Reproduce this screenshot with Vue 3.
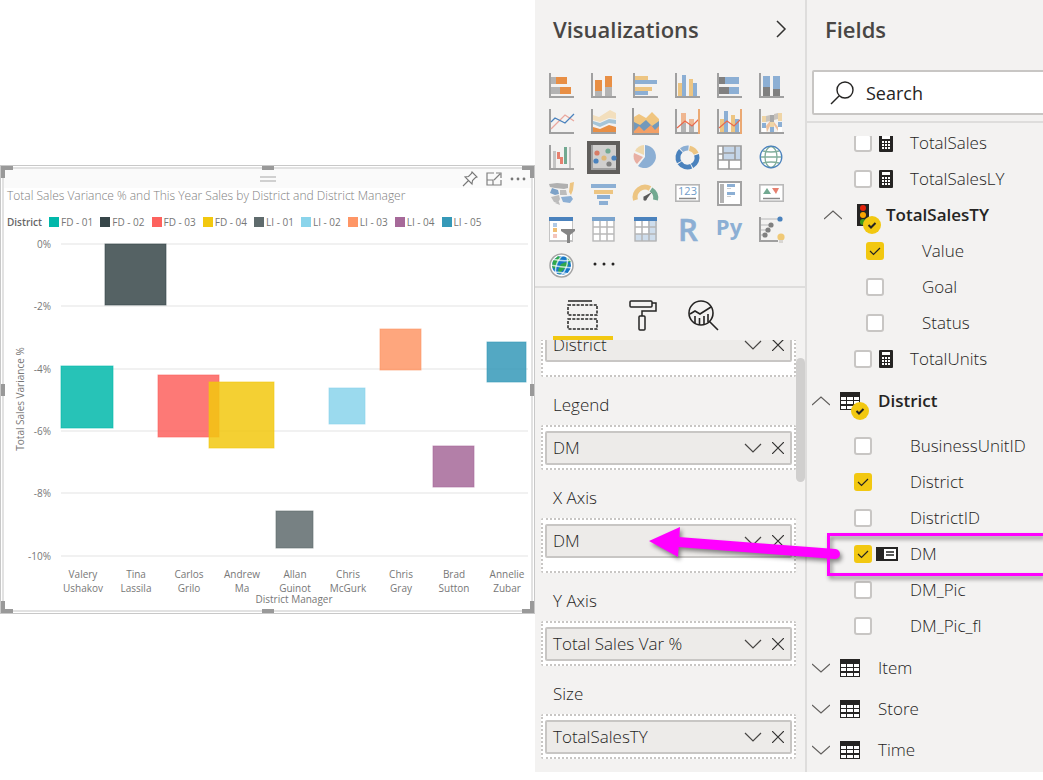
<script setup>
import { ref } from 'vue'

const series = [
  { name: 'FD - 01', color: '#01b8aa', x: 61, y: 366, size: 52, h: 62 },
  { name: 'FD - 02', color: '#374649', x: 105, y: 244, size: 61, h: 61 },
  { name: 'FD - 03', color: '#fd625e', x: 158, y: 375, size: 61, h: 62 },
  { name: 'FD - 04', color: '#f2c80f', x: 209, y: 382, size: 65, h: 66 },
  { name: 'LI - 01', color: '#5f6b6d', x: 276, y: 511, size: 37, h: 37 },
  { name: 'LI - 02', color: '#8ad4eb', x: 329, y: 388, size: 36, h: 36 },
  { name: 'LI - 03', color: '#fe9666', x: 380, y: 329, size: 41, h: 41 },
  { name: 'LI - 04', color: '#a66999', x: 433, y: 446, size: 41, h: 41 },
  { name: 'LI - 05', color: '#3599b8', x: 487, y: 342, size: 39, h: 40 },
]

const ticks = ['0%', '-2%', '-4%', '-6%', '-8%', '-10%'].map((label, i) => ({
  label,
  y: Math.round(244 + i * 62.3),
}))

const managers = [
  ['Valery', 'Ushakov'], ['Tina', 'Lassila'], ['Carlos', 'Grilo'],
  ['Andrew', 'Ma'], ['Allan', 'Guinot'], ['Chris', 'McGurk'],
  ['Chris', 'Gray'], ['Brad', 'Sutton'], ['Annelie', 'Zubar'],
].map((parts, i) => ({ parts, x: 83 + i * 53 }))

const handles = ['tl', 't', 'tr', 'l', 'r', 'bl', 'b', 'br']

const axes = '<path d="M1 0V24H25" fill="none" stroke="#a0a0a0" stroke-width="2"/>'
const bar = (x, y, w, h, c) => `<rect x="${x}" y="${y}" width="${w}" height="${h}" fill="${c}"/>`
const dot = (x, y, r, c) => `<circle cx="${x}" cy="${y}" r="${r}" fill="${c}"/>`
const arc = (start, len, c) => `<circle cx="12.5" cy="12.5" r="9.5" fill="none" stroke="${c}" stroke-width="5" pathLength="360" stroke-dasharray="${len} ${360 - len}" transform="rotate(${start - 90} 12.5 12.5)"/>`
const O = '#e88f45', G = '#b3b3b3', B = '#8cafd4', Y = '#edc582', D = '#808080', N = '#4a82bd', R = '#e6806f', T = '#72a991'
const line = '<path d="M2 19 10 12 17 17 24 10" fill="none" stroke="#e8694c" stroke-width="1.2"/><path d="M24 0V25" stroke="#eba973" stroke-width="2"/>'

const visuals = [
  { name: 'Stacked bar chart', art: axes + bar(2, 4, 5, 7, G) + bar(7, 4, 11, 7, O) + bar(2, 14, 9, 7, G) + bar(11, 14, 11, 7, O) },
  { name: 'Stacked column chart', art: axes + bar(4, 7, 7, 11, O) + bar(4, 18, 7, 5, G) + bar(14, 3, 7, 11, O) + bar(14, 14, 7, 9, G) },
  { name: 'Clustered bar chart', art: axes + bar(2, 3, 13, 4, Y) + bar(2, 7, 22, 4, B) + bar(2, 14, 17, 4, Y) + bar(2, 18, 13, 4, B) },
  { name: 'Clustered column chart', art: axes + bar(3, 10, 4, 13, Y) + bar(7, 2, 4, 21, B) + bar(14, 6, 4, 17, Y) + bar(18, 10, 4, 13, B) },
  { name: '100% stacked bar chart', art: axes + bar(2, 4, 6, 7, D) + bar(8, 4, 14, 7, B) + bar(2, 14, 10, 7, D) + bar(12, 14, 10, 7, B) },
  { name: '100% stacked column chart', art: axes + bar(4, 3, 7, 11, B) + bar(4, 14, 7, 9, D) + bar(14, 3, 7, 13, B) + bar(14, 16, 7, 7, D) },
  { name: 'Line chart', art: axes + '<g fill="none" stroke-width="1.3"><path d="M2 20 16 6 25 12" stroke="#eaa89e"/><path d="M2 13 6 9 16 14 25 5" stroke="#4a82bd"/></g>' },
  { name: 'Area chart', art: '<path d="M2 6 8 8 19 1 25 4V10L18 9 9 13 2 11Z" fill="#f3dfbd"/><path d="M2 12 9 14 18 10 25 11V15L18 14 9 18 2 15Z" fill="#a5c5d8"/><path d="M2 18 9 20 18 16 25 18V23H2Z" fill="#e88f45"/>' + axes },
  { name: 'Stacked area chart', art: '<path d="M1 8 6 5 13 9 19 3 26 10V24H1Z" fill="#f0c57f"/><path d="M1 13 7 16 13 11 19 17 26 12V24H1Z" fill="#7299bb"/><path d="M1 22 6 17 11 22 18 16 22 21 26 17V24H1Z" fill="#f3a066"/><path d="M0 -1V25H26" fill="none" stroke="#999" stroke-width="2"/>' },
  { name: 'Line and stacked column chart', art: axes + bar(6, 4, 5, 10, '#efb690') + bar(6, 14, 5, 9, G) + bar(14, 10, 5, 6, '#efb690') + bar(14, 16, 5, 7, G) + line },
  { name: 'Line and clustered column chart', art: axes + bar(3, 10, 4, 13, Y) + bar(7, 2, 4, 21, B) + bar(14, 6, 4, 17, Y) + bar(18, 10, 4, 13, B) + line },
  { name: 'Ribbon chart', art: axes + '<path d="M7 7 11 6V12L7 13ZM15 5 19 4V10L15 11Z" fill="#c8c3bd"/><path d="M7 17 11 12V17L8 23ZM15 13 19 18V22L15 16Z" fill="#f0c19c"/>' + bar(3, 7, 4, 6, '#efd5a6') + bar(3, 14, 4, 5, B) + bar(3, 19, 4, 4, '#fff') + bar(11, 6, 4, 7, '#a8a8a8') + bar(11, 13, 4, 5, '#efd5a6') + bar(11, 18, 4, 5, B) + bar(19, 4, 4, 8, '#efd5a6') + bar(19, 13, 4, 5, B) + bar(19, 18, 4, 5, '#fff') },
  { name: 'Waterfall chart', art: axes + bar(4, 6, 3, 17, '#c4c4c4') + bar(8, 7, 3, 7, R) + bar(11, 12, 3, 7, R) + bar(15, 2, 3, 17, T) + bar(20, 2, 2, 21, '#c4c4c4') },
  { name: 'Scatter chart', selected: true, art: axes + dot(6, 8, 2.6, '#d87c66') + dot(17, 6, 2.6, T) + dot(13, 13, 2.6, '#dfb878') + dot(5, 16, 2.6, N) + dot(23, 13, 2.6, N) + dot(18, 19, 2.6, D) },
  { name: 'Pie chart', art: '<path d="M12 0A11.5 11.5 0 1 1 5 21L12 12Z" fill="#8cafd4"/><path d="M11 0V10L2 6A11 11 0 0 1 11 0Z" fill="#efd9ae"/><path d="M1 8 10 12 4 19A11 11 0 0 1 1 8Z" fill="#e8afa3"/>' },
  { name: 'Donut chart', art: arc(12, 55, Y) + arc(73, 78, N) + arc(157, 78, N) + arc(241, 74, N) + arc(321, 45, B) },
  { name: 'Treemap', art: bar(1, 1, 23, 23, '#fff') + bar(6, 2, 12, 13, '#c4d5e8') + bar(18, 2, 6, 13, '#c4d5e8') + '<path d="M1 1H24V24H1ZM6 1V15M18 1V15M1 15H24M6 8H18M1 9H6M12 15V24" fill="none" stroke="#9a9a9a" stroke-width="1.6"/>' },
  { name: 'Map', art: '<circle cx="12" cy="12" r="10.5" fill="#fff"/><g fill="none" stroke="#82ae9c" stroke-width="1.3"><ellipse cx="12" cy="12" rx="6" ry="10.5"/><path d="M2 12H22M4 6Q12 8 20 6M4 18Q12 16 20 18"/></g><circle cx="12" cy="12" r="10.8" fill="none" stroke="#4a82bd" stroke-width="1.3"/>' },
  { name: 'Filled map', art: '<path d="M0 3 8 2 19 3V7L15 8 6 7 1 6Z" fill="#b0b0b0"/><path d="M3 7 9 9 10 13 6 14 1 12Z" fill="#7da2c8"/><path d="M11 9 17 9 18 14 11 14ZM2 16 10 14 11 18 9 22 5 21ZM6 22 10 21 11 24Z" fill="#bcbcbc"/><path d="M12 16 22 15 24 18 21 22 14 21Z" fill="#8cafd4"/><path d="M21 2 25 1 24 9 22 14 20 11Z" fill="#edc582"/>' },
  { name: 'Funnel', art: bar(0, 3, 25, 4, B) + bar(3, 9, 19, 4, Y) + bar(6, 14, 13, 4, B) + bar(8, 20, 9, 4, B) },
  { name: 'Gauge', art: '<path d="M2.5 19A10 10 0 0 1 17 7.5" fill="none" stroke="#edc582" stroke-width="5"/><path d="M18 8.500A10 10 0 0 1 22.5 19" fill="none" stroke="#72a991" stroke-width="5"/><path d="M10 16 19 11 13 19Z" fill="#5a5a5a"/>' + dot(12, 18, 1.7, '#5a5a5a') },
  { name: 'Card', art: '<rect x=".8" y="3.8" width="23.4" height="16.4" fill="#fff" stroke="#b5b5b5" stroke-width="1.6"/><text x="12.5" y="14" font-family="Open Sans, sans-serif" font-size="11" text-anchor="middle" fill="#6f9cc8">123</text><path d="M4 17.500H21" stroke="#888" stroke-width="1.5"/>' },
  { name: 'Multi-row card', art: '<rect x="1" y="1" width="23" height="23" fill="#fff" stroke="#a3a3a3" stroke-width="2"/>' + bar(3, 3, 4, 19, G) + bar(10, 3, 8, 3, B) + bar(10, 7, 4, 1, '#ccc') + bar(10, 11, 8, 3, B) + bar(10, 15, 4, 1, '#ccc') },
  { name: 'KPI', art: '<rect x=".8" y="3.8" width="23.4" height="16.4" fill="#fff" stroke="#b9b9b9" stroke-width="1.6"/><path d="M4 13 8 7 12 13Z" fill="#72a991"/><path d="M13 7H20L17 13Z" fill="#e6806f"/><path d="M4 17.500H21" stroke="#888" stroke-width="1.5"/>' },
  { name: 'Slicer', art: bar(0, 0, 24, 25, '#c4c4c4') + bar(1, 4, 22, 19, '#fff') + bar(0, 0, 24, 4, N) + bar(4, 6, 4, 4, '#b0c9e4') + bar(4, 11, 4, 4, '#f0be72') + bar(4, 17, 4, 4, '#f3c5bc') + '<path d="M12 12H26L26 14 21 18V26H18V18L12 14Z" fill="#858585"/>' },
  { name: 'Table', art: bar(1, 0, 23, 25, '#fff') + bar(1, 0, 23, 4, '#7ba4cd') + '<path d="M2 4V24H23V4M2 10H23M2 17H23M9 4V24M16 4V24" fill="none" stroke="#b9b9b9" stroke-width="1.5"/>' },
  { name: 'Matrix', art: bar(1, 0, 23, 25, '#fff') + bar(15, 4, 9, 20, '#ceddec') + bar(2, 17, 14, 7, '#ceddec') + bar(1, 0, 23, 4, N) + '<path d="M2 4V24H23V4M2 10H23M2 17H23M9 4V24M16 4V24" fill="none" stroke="#b5b5b5" stroke-width="1.5"/>' },
  { name: 'R script visual', art: '<text x="13" y="24" font-family="Open Sans, sans-serif" font-size="31" font-weight="600" text-anchor="middle" fill="#8cafd4" stroke="#8cafd4" stroke-width=".6">R</text>' },
  { name: 'Python visual', art: '<text x="12" y="18" font-family="Open Sans, sans-serif" font-size="22" font-weight="700" text-anchor="middle" fill="#8cafd4">Py</text>' },
  { name: 'Key influencers', art: '<path d="M2 2H20M2 8H12M2 13H9M2 18H6" stroke="#ccc" stroke-width="1.5"/><path d="M1 0V24H19" fill="none" stroke="#a0a0a0" stroke-width="2"/>' + dot(21, 2, 2.6, N) + dot(12, 8, 2.6, D) + dot(9, 13, 2.6, D) + dot(6, 18, 2.6, D) + dot(22, 20, 3.6, '#f0c976') + bar(20, 23, 4, 3, '#d8d6d3') },
  { name: 'ArcGIS map', art: '<circle cx="12.5" cy="12.5" r="11" fill="#fff"/><circle cx="12.5" cy="12.5" r="9.5" fill="#1678c8"/><path d="M4 8 9 3 12 5 8 10 6 16 3 14ZM12 11 17 9 20 12 14 17 10 21 9 17ZM17 4 22 8 20 10Z" fill="#2fa84b"/><g fill="none" stroke="#fff" stroke-opacity=".7" stroke-width="1.4"><ellipse cx="12.5" cy="12.5" rx="5" ry="11" transform="rotate(20 12.5 12.5)"/><path d="M3 6Q14 9 23 7M1 12Q11 14 24 15M3 19Q12 19 20 21"/></g><circle cx="12.5" cy="12.5" r="11.5" fill="none" stroke="#a5a5a5" stroke-width="1.5"/>' },
  { name: 'More visuals', art: dot(4, 11, 1.5, '#252423') + dot(13, 11, 1.5, '#252423') + dot(22, 11, 1.5, '#252423') },
]

const wells = [
  { value: 'District', roomy: true },
  { label: 'Legend', value: 'DM' },
  { label: 'X Axis', value: 'DM', roomy: true },
  { label: 'Y Axis', value: 'Total Sales Var %' },
  { label: 'Size', value: 'TotalSalesTY' },
]

const rows = ref([
  { kind: 'field', name: 'TotalSales', icon: 'calc', checked: false },
  { kind: 'field', name: 'TotalSalesLY', icon: 'calc', checked: false },
  { kind: 'kpi', name: 'TotalSalesTY' },
  { kind: 'field', name: 'Value', nested: true, checked: true },
  { kind: 'field', name: 'Goal', nested: true, checked: false },
  { kind: 'field', name: 'Status', nested: true, checked: false },
  { kind: 'field', name: 'TotalUnits', icon: 'calc', checked: false },
  { kind: 'table', name: 'District', open: true },
  { kind: 'field', name: 'BusinessUnitID', checked: false },
  { kind: 'field', name: 'District', checked: true },
  { kind: 'field', name: 'DistrictID', checked: false },
  { kind: 'field', name: 'DM', icon: 'card', checked: true },
  { kind: 'field', name: 'DM_Pic', checked: false },
  { kind: 'field', name: 'DM_Pic_fl', checked: false },
  { kind: 'table', name: 'Item' },
  { kind: 'table', name: 'Store' },
  { kind: 'table', name: 'Time' },
])
</script>

<template>
  <div class="app">
    <main class="report">
      <section class="visual" aria-label="Scatter chart">
        <span v-for="h in handles" :key="h" class="handle" :class="h"></span>
        <header class="visual-bar">
          <svg class="grip" width="16" height="6" viewBox="0 0 16 6"><path d="M0 1H16M0 5H16" stroke="#a6a6a6" stroke-width="1.2" /></svg>
          <div class="visual-tools">
            <button aria-label="Pin visual">
              <svg width="16" height="16" viewBox="0 0 16 16" fill="none" stroke="#777" stroke-width="1.1"><path d="M10 1 15 6 13.5 6.5 10.5 9.5 10 13 3 6 6.5 5.5 9.5 2.5ZM6.5 9.5 1 15" /></svg>
            </button>
            <button aria-label="Focus mode">
              <svg width="16" height="14" viewBox="0 0 16 14" fill="none" stroke="#808080" stroke-width="1.2"><path d="M8 1H1V13H15V8M1 8H7V13M8 8 14 2M10 1H15V6" /></svg>
            </button>
            <button aria-label="More options">
              <svg width="16" height="4" viewBox="0 0 16 4" fill="#777"><circle cx="2" cy="2" r="1.4" /><circle cx="8" cy="2" r="1.4" /><circle cx="14" cy="2" r="1.4" /></svg>
            </button>
          </div>
        </header>
        <h1>Total Sales Variance % and This Year Sales by District and District Manager</h1>
        <div class="legend">
          <b>District</b>
          <span v-for="s in series" :key="s.name" class="legend-item">
            <i :style="{ background: s.color }"></i>{{ s.name }}
          </span>
        </div>
        <svg class="plot" viewBox="0 232 535 382">
          <g v-for="t in ticks" :key="t.label">
            <path :d="`M61 ${t.y}H528`" stroke="#ececec" stroke-width="1.5" />
            <text x="51" :y="t.y + 4" text-anchor="end">{{ t.label }}</text>
          </g>
          <rect
            v-for="s in series" :key="s.name" :x="s.x" :y="s.y" :width="s.size" :height="s.h"
            :fill="s.color" :stroke="s.color" fill-opacity=".85" stroke-opacity=".6"
          />
          <g v-for="m in managers" :key="m.x" text-anchor="middle">
            <text :x="m.x" y="578">{{ m.parts[0] }}</text>
            <text :x="m.x" y="592">{{ m.parts[1] }}</text>
          </g>
          <text x="294" y="603" text-anchor="middle">District Manager</text>
          <text transform="translate(24 399) rotate(-90)" text-anchor="middle">Total Sales Variance %</text>
        </svg>
      </section>
    </main>

    <aside class="viz">
      <header class="pane-head">
        <h2>Visualizations</h2>
        <button aria-label="Collapse pane">
          <svg width="12" height="20" viewBox="0 0 12 20" fill="none" stroke="#323130" stroke-width="1.5"><path d="M2 2 10 10 2 18" /></svg>
        </button>
      </header>
      <div class="gallery">
        <button v-for="v in visuals" :key="v.name" :aria-label="v.name" :class="{ selected: v.selected }">
          <svg width="25" height="25" viewBox="0 0 25 25" v-html="v.art"></svg>
        </button>
      </div>
      <nav class="tabs">
        <button class="active" aria-label="Fields">
          <svg width="32" height="32" viewBox="0 0 32 32" fill="none" stroke="#252423" stroke-width="1.5"><path d="M1 2H25" /><path d="M1 6H30V16H1ZM1 20H30V30H1Z" stroke-dasharray="3 1.3" /></svg>
        </button>
        <button aria-label="Format">
          <svg width="32" height="32" viewBox="0 0 32 32" fill="none" stroke="#252423" stroke-width="1.5"><rect x="3" y="2" width="22" height="6" rx="1" /><path d="M25 4H29V12H15V17" /><rect x="12" y="17" width="6" height="14" rx="1" /></svg>
        </button>
        <button aria-label="Analytics">
          <svg width="32" height="32" viewBox="0 0 32 32" fill="none" stroke="#252423" stroke-width="1.6"><circle cx="14" cy="14" r="12" /><path d="M22.5 22.5 31 31M3 15 8 12 13 15 24 8M8 17V24M12.5 19V26M17 17V25M21 15V23" /></svg>
        </button>
      </nav>
      <div class="wells">
        <div class="well-list">
          <div v-for="w in wells" :key="w.label || 'Details'" class="well">
            <h3 v-if="w.label">{{ w.label }}</h3>
            <div class="drop" :class="{ roomy: w.roomy }">
              <div class="pill">
                <span>{{ w.value }}</span>
                <button aria-label="Field options">
                  <svg width="18" height="10" viewBox="0 0 18 10" fill="none" stroke="#484644" stroke-width="1.2"><path d="M1 1 9 9 17 1" /></svg>
                </button>
                <button aria-label="Remove field">
                  <svg width="12" height="12" viewBox="0 0 12 12" fill="none" stroke="#323130" stroke-width="1.2"><path d="M0 0 12 12M12 0 0 12" /></svg>
                </button>
              </div>
            </div>
          </div>
        </div>
        <span class="thumb"></span>
      </div>
    </aside>

    <aside class="fields">
      <header class="pane-head"><h2>Fields</h2></header>
      <div class="search-wrap">
        <label class="search">
          <svg width="24" height="24" viewBox="0 0 24 24" fill="none" stroke="#252423" stroke-width="1.4"><circle cx="15" cy="9" r="8" /><path d="M9 15 1 23" /></svg>
          <input type="text" placeholder="Search" aria-label="Search" />
        </label>
      </div>
      <div class="tree">
        <div class="rows">
          <template v-for="(r, i) in rows" :key="i">
            <label v-if="r.kind === 'field'" class="field" :class="{ nested: r.nested }">
              <span class="check">
                <input v-model="r.checked" type="checkbox" />
                <svg v-if="r.checked" width="18" height="18" viewBox="0 0 18 18" fill="none" stroke="#252423" stroke-width="1.2"><path d="M4 9 7.5 12.5 14 6" /></svg>
              </span>
              <span class="glyph">
                <svg v-if="r.icon === 'calc'" width="14" height="18" viewBox="0 0 14 18"><rect width="14" height="18" rx="1" fill="#252423" /><path d="M3 2H11V5H3ZM3 7H5V9H3ZM6 7H8V9H6ZM9 7H11V9H9ZM3 10H5V12H3ZM6 10H8V12H6ZM9 10H11V12H9ZM3 13H5V15H3ZM6 13H8V15H6ZM9 13H11V15H9Z" fill="#fff" /></svg>
                <svg v-if="r.icon === 'card'" class="wide" width="22" height="14" viewBox="0 0 22 14"><rect width="22" height="14" fill="#252423" /><path d="M8 2H20V12H8Z" fill="#fff" /><path d="M10 5H18M10 8H18" stroke="#252423" stroke-width="1.3" /></svg>
              </span>
              <span>{{ r.name }}</span>
            </label>
            <button v-else class="branch" :class="[r.kind, { open: r.open }]">
              <svg class="chevron" width="18" height="10" viewBox="0 0 18 10" fill="none" stroke="#605e5c" stroke-width="1.2">
                <path :d="r.open || r.kind === 'kpi' ? 'M0 9 9 1 18 9' : 'M0 1 9 9 18 1'" />
              </svg>
              <span class="node">
                <svg v-if="r.kind === 'kpi'" width="12" height="22" viewBox="0 0 12 22"><rect width="12" height="22" fill="#252423" /><circle cx="6" cy="4" r="3" fill="#e3230b" /><circle cx="6" cy="11" r="3" fill="#f9a500" /><circle cx="6" cy="18" r="3" fill="#3b9b19" /></svg>
                <svg v-else width="20" height="18" viewBox="0 0 20 18"><rect width="20" height="18" fill="#252423" /><path d="M1 5H6V8H1ZM7 5H13V8H7ZM14 5H19V8H14ZM1 9H6V12H1ZM7 9H13V12H7ZM14 9H19V12H14ZM1 14H6V17H1ZM7 14H13V17H7ZM14 14H19V17H14Z" fill="#fff" /></svg>
                <svg v-if="r.open || r.kind === 'kpi'" class="badge" width="18" height="18" viewBox="0 0 18 18"><circle cx="9" cy="9" r="9" fill="#f2c811" /><path d="M5.5 9 8 11.5 12.5 7" fill="none" stroke="#252423" stroke-width="2" /></svg>
              </span>
              <span>{{ r.name }}</span>
            </button>
          </template>
        </div>
      </div>
    </aside>

    <svg class="callout" width="400" height="70" viewBox="643 520 400 70">
      <rect x="828.5" y="534.5" width="230" height="40" fill="none" stroke="#ff00ff" stroke-width="3" />
      <path d="M678 542 835 554" stroke="#ff00ff" stroke-width="10" stroke-linecap="round" />
      <path d="M649 541 680 527 678 557Z" fill="#ff00ff" />
    </svg>
  </div>
</template>

<style>
body {
  background: #fff;
}
</style>

<style scoped>
.app {
  position: relative;
  display: flex;
  font-family: "Open Sans", "Noto Sans", sans-serif;
  color: #252423;
  overflow: hidden;
}
button {
  margin: 0;
  padding: 0;
  border: 0;
  background: none;
  font: inherit;
  color: inherit;
}
svg {
  display: block;
}
h1, h2, h3 {
  margin: 0;
  font-weight: 400;
}

/* Report canvas */
.report {
  flex: 1;
  min-width: 0;
  padding-top: 165px;
}
.visual {
  position: relative;
  box-shadow: inset 0 0 0 1px #c8c8c8, inset 0 0 0 2px #fff, inset 0 0 0 4px #e2e2e2;
}
.handle {
  position: absolute;
  box-sizing: border-box;
  width: 12px;
  height: 12px;
  border: 0 solid #999;
}
.tl { top: 1px; left: 1px; border-width: 4px 0 0 4px; }
.tr { top: 1px; right: 1px; border-width: 4px 4px 0 0; }
.bl { bottom: 1px; left: 1px; border-width: 0 0 4px 4px; }
.br { bottom: 1px; right: 1px; border-width: 0 4px 4px 0; }
.t { top: 1px; left: calc(50% - 6px); border-top-width: 4px; }
.b { bottom: 1px; left: calc(50% - 6px); border-bottom-width: 4px; }
.l { left: 1px; top: calc(50% - 6px); border-left-width: 4px; }
.r { right: 1px; top: calc(50% - 6px); border-right-width: 4px; }
.visual-bar {
  display: grid;
  grid-template-columns: 1fr auto 1fr;
  align-items: center;
  height: 19px;
  margin: 0 4px;
  border-top: 4px solid transparent;
  background: #fafafa;
  background-clip: padding-box;
}
.grip {
  grid-column: 2;
}
.visual-tools {
  display: flex;
  align-items: center;
  justify-content: flex-end;
  gap: 8px;
  padding-right: 5px;
}
.visual h1 {
  padding-left: 7px;
  font-family: "Open Sans", "Noto Sans", sans-serif;
  font-weight: 300;
  font-size: 12px;
  line-height: 16px;
  color: #808080;
  white-space: nowrap;
}
.legend {
  display: flex;
  align-items: center;
  gap: 7px;
  height: 28px;
  padding: 8px 0 0 7px;
  box-sizing: border-box;
  font-size: 10px;
  color: #777;
  white-space: nowrap;
}
.legend b {
  font-weight: 600;
  color: #666;
}
.legend-item {
  display: flex;
  align-items: center;
  gap: 2px;
}
.legend-item i {
  width: 10px;
  height: 10px;
}
.plot {
  width: 100%;
  font-size: 10px;
  fill: #777;
}

/* Panes */
.viz, .fields {
  box-sizing: border-box;
  background: #f3f2f1;
}
.viz {
  flex: 0 0 272px;
  border-right: 2px solid #dedddc;
}
.fields {
  flex: 0 0 236px;
  overflow: hidden;
}
.pane-head {
  display: flex;
  align-items: center;
  justify-content: space-between;
  height: 60px;
  padding: 0 18px 3px;
  box-sizing: border-box;
}
.pane-head h2 {
  font-size: 22px;
  line-height: 30px;
  font-weight: 600;
  color: #484644;
}
.gallery {
  display: grid;
  grid-template-columns: repeat(6, 33px);
  grid-auto-rows: 33px;
  gap: 3px 9px;
  padding: 9px 0 4px 10px;
}
.gallery button {
  display: grid;
  place-items: center;
}
.gallery svg {
  overflow: visible;
}
.gallery .selected {
  background: #d0cfce;
  box-shadow: inset 0 0 0 4px #605e5c;
}
.tabs {
  display: flex;
  height: 54px;
  padding-left: 18px;
  border-top: 2px solid #dedddc;
  box-sizing: border-box;
}
.tabs button {
  display: grid;
  justify-content: center;
  width: 60px;
  padding-top: 11px;
  box-sizing: border-box;
  align-content: start;
}
.tabs .active {
  background: linear-gradient(#f2c811, #f2c811) bottom / 100% 4px no-repeat;
}
.wells {
  position: relative;
  overflow: hidden;
}
.well-list {
  margin-top: -18px;
  padding: 0 9px 13px 6px;
}
.well h3 {
  height: 48px;
  padding: 8px 0 0 12px;
  box-sizing: border-box;
  font-size: 17px;
  line-height: 40px;
  font-weight: 300;
}
.drop {
  padding: 4px 2px 3px;
  background: #fff;
  border: 2px dotted #c8c6c4;
  border-radius: 2px;
}
.drop.roomy {
  padding-bottom: 13px;
}
.pill {
  display: flex;
  align-items: center;
  gap: 10px;
  height: 34px;
  box-sizing: border-box;
  padding: 0 6px;
  border: 2px solid #c8c6c4;
  border-radius: 2px;
  background: #edebe9;
  font-size: 17px;
  line-height: 30px;
  font-weight: 300;
}
.pill span {
  flex: 1;
}
.thumb {
  position: absolute;
  right: 0;
  top: 18px;
  width: 9px;
  height: 124px;
  border-radius: 5px;
  background: #d0cfce;
}

/* Fields pane */
.search-wrap {
  padding: 10px 0 6px 5px;
  border-bottom: 2px solid #dedddc;
}
.search {
  display: flex;
  align-items: center;
  gap: 12px;
  height: 45px;
  margin-right: -10px;
  padding-left: 16px;
  box-sizing: border-box;
  border: 2px solid #c8c6c4;
  border-radius: 2px;
  background: #fff;
}
.search input {
  flex: 1;
  min-width: 0;
  border: 0;
  padding: 0;
  outline: 0;
  background: none;
  font: 400 18px "Open Sans", "Noto Sans", sans-serif;
  color: #252423;
}
.search input::placeholder {
  color: #252423;
  opacity: 1;
}
.tree {
  margin-top: 13px;
  overflow: hidden;
}
.rows {
  margin-top: -11px;
  font-size: 17px;
  line-height: 22px;
  font-weight: 300;
}
.field {
  display: flex;
  align-items: center;
  height: 36px;
  padding-left: 47px;
}
.field.nested {
  padding-left: 59px;
}
.check {
  display: grid;
}
.check > * {
  grid-area: 1 / 1;
}
.check input {
  appearance: none;
  width: 18px;
  height: 18px;
  margin: 0;
  box-sizing: border-box;
  border: 2px solid #c8c6c4;
  border-radius: 3px;
  background: #fff;
}
.check input:checked {
  border-color: #f2c811;
  background: #f2c811;
}
.check svg {
  position: relative;
  pointer-events: none;
}
.glyph {
  width: 31px;
  padding-left: 7px;
}
.glyph .wide {
  margin-left: -3px;
}
.branch {
  display: flex;
  align-items: center;
  width: 100%;
  height: 41px;
  padding-left: 5px;
  text-align: left;
}
.branch .chevron {
  margin-right: 10px;
}
.node {
  position: relative;
  width: 38px;
}
.branch.kpi {
  height: 36px;
  padding-left: 17px;
  font-weight: 600;
}
.kpi .chevron {
  margin-right: 15px;
}
.kpi .node {
  width: 29px;
}
.branch.open {
  margin: 3px 0 7px;
  font-weight: 600;
}
.badge {
  position: absolute;
  left: 11px;
  top: 10px;
}
.kpi .badge {
  left: 6px;
  top: 12px;
}
.field + .branch.table:not(.open) {
  margin-top: 3px;
}
.callout {
  position: absolute;
  top: 520px;
  right: 0;
  pointer-events: none;
  filter: drop-shadow(2px 3px 2px rgba(0, 0, 0, 0.45));
}
</style>
